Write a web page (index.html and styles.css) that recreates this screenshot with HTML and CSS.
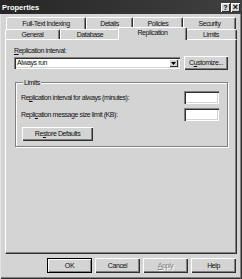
FILE: index.html
```html
<!DOCTYPE html>
<html>
<head>
<meta charset="utf-8">
<link rel="stylesheet" href="styles.css">
</head>
<body>
<div class="win">
  <div class="titlebar">
    <span class="title">Properties</span>
    <div class="tbtns">
      <span class="tbtn">?</span>
      <span class="tbtn x">×</span>
    </div>
  </div>
  <div class="tabs">
    <div class="tabrow back">
      <div class="tab w-fti">Full-Text Indexing</div>
      <div class="tab w-det">Details</div>
      <div class="tab w-pol">Policies</div>
      <div class="tab w-sec">Security</div>
    </div>
    <div class="tabrow front">
      <div class="tab w-gen">General</div>
      <div class="tab w-db">Database</div>
      <div class="tab w-rep sel">Replication</div>
      <div class="tab w-lim">Limits</div>
    </div>
  </div>
  <div class="panel">
    <div class="lbl"><u>R</u>eplication interval:</div>
    <div class="row">
      <div class="combo">
        <span class="combo-text">Always run</span>
        <span class="combo-btn"><svg width="5" height="3" viewBox="0 0 5 3"><path d="M0 0h5L2.5 3z" fill="#000"/></svg></span>
      </div>
      <div class="btn cust">C<u>u</u>stomize...</div>
    </div>
    <fieldset class="group">
      <legend>Limits</legend>
      <div class="frow">
        <span>Re<u>p</u>lication interval for always (minutes):</span>
        <span class="input"></span>
      </div>
      <div class="frow">
        <span>Repli<u>c</u>ation message size limit (KB):</span>
        <span class="input"></span>
      </div>
      <div class="btn restore">Re<u>s</u>tore Defaults</div>
    </fieldset>
  </div>
  <div class="actions">
    <div class="btn act def">OK</div>
    <div class="btn act">Cancel</div>
    <div class="btn act dis"><u>A</u>pply</div>
    <div class="btn act">Help</div>
  </div>
</div>
</body>
</html>
```
FILE: styles.css
```css
* { box-sizing: border-box; }
html, body { margin: 0; padding: 0; background: #d4d4d4; }
body { font-family: "Liberation Sans", Arial, sans-serif; font-size: 7px; letter-spacing: -0.42px; color: #111; }
u { text-decoration: underline; text-underline-offset: 1px; }

.win {
  width: 242px; height: 279px; background: #d4d4d4;
  box-shadow: inset 1px 0 #e4e4e4, inset -1px -1px #303030, inset -2px -2px #808080;
  display: flex; flex-direction: column;
}

.titlebar {
  height: 14px; flex: none;
  background: linear-gradient(to right, #262626, #404040);
  display: flex; align-items: center; justify-content: space-between;
  padding: 0 2px 0 2px;
}
.title { font-weight: bold; font-size: 7.5px; letter-spacing: 0; color: #fff; }
.tbtns { display: flex; gap: 1px; margin-top: 1px; }
.tbtn {
  width: 9px; height: 9px; background: #d4d4d4;
  box-shadow: inset 1px 1px #fff, inset -1px -1px #303030;
  font-weight: bold; font-size: 7px; letter-spacing: 0;
  line-height: 9px; text-align: center; color: #000;
}
.tbtn.x { font-size: 9px; line-height: 9px; }

.tabs { margin-top: 3px; flex: none; }
.tabrow { display: flex; }
.tabrow.back { height: 12px; padding-left: 6px; }
.tabrow.front { height: 10px; padding-left: 5px; }
.tab {
  height: 100%; flex: none; text-align: center; line-height: 11px;
  border-top: 1px solid #fff; border-left: 1px solid #fff; border-right: 1px solid #303030;
  box-shadow: inset -1px 0 #808080;
  border-radius: 2px 2px 0 0; background: #d4d4d4;
}
.tabrow.front .tab { line-height: 9px; }
.w-fti { width: 80px; }
.w-det { width: 47px; }
.w-pol { width: 50px; }
.w-sec { width: 53px; }
.w-gen { width: 55px; }
.w-db { width: 60px; }
.w-rep { width: 65px; }
.w-lim { width: 52px; }
.tab.sel {
  width: 69px; height: 13px; margin: -2px -2px -1px; position: relative; z-index: 2;
  line-height: 10px !important;
}

.panel {
  height: 215px; margin: 0 5px; flex: none;
  border-top: 1px solid #fff; border-left: 1px solid #fff;
  border-right: 1px solid #303030; border-bottom: 1px solid #303030;
  box-shadow: inset -1px -1px #808080;
  padding: 6px 8px 0 8px;
}
.lbl { height: 10px; line-height: 10px; }
.row { display: flex; gap: 4px; align-items: flex-start; }
.combo {
  width: 166px; height: 12px; margin-top: 1px; background: #fff;
  box-shadow: inset 1px 1px #808080, inset 2px 2px #303030, inset -1px -1px #fff, inset -2px -2px #d4d4d4;
  display: flex; align-items: center; justify-content: space-between; padding: 2px;
}
.combo-text { padding-left: 1px; line-height: 8px; }
.combo-btn {
  width: 9px; height: 8px; background: #d4d4d4;
  box-shadow: inset 1px 1px #fff, inset -1px -1px #303030;
  display: flex; align-items: center; justify-content: center;
}
.btn {
  background: #d4d4d4; text-align: center;
  box-shadow: inset 1px 1px #fff, inset -1px -1px #303030, inset -2px -2px #808080;
}
.cust { width: 44px; height: 14px; line-height: 14px; }

.group {
  margin: 8px 0 0 1px; width: 213px; padding: 4px 8px 5px 5px; min-width: 0;
  border: 1px solid #808080; box-shadow: inset 1px 1px #fff, 1px 1px #fff;
}
.group legend { padding: 0 1px; margin-left: 2px; line-height: 9px; background: #d4d4d4; }
.frow { display: flex; justify-content: space-between; align-items: center; height: 13px; }
.frow + .frow { margin-top: 4px; }
.input {
  width: 35px; height: 13px; background: #fff;
  box-shadow: inset 1px 1px #808080, inset 2px 2px #303030, inset -1px -1px #fff, inset -2px -2px #d4d4d4;
}
.restore { width: 71px; height: 14px; line-height: 14px; margin: 6px 0 0 1px; }

.actions { display: flex; justify-content: flex-end; gap: 3px; margin: 4px 6px 0 0; }
.act { width: 45px; height: 15px; line-height: 15px; }
.act.def { box-shadow: inset 0 0 0 1px #000, inset 2px 2px #fff, inset -2px -2px #808080; }
.dis { color: #808080; text-shadow: 1px 1px #fff; }
```
